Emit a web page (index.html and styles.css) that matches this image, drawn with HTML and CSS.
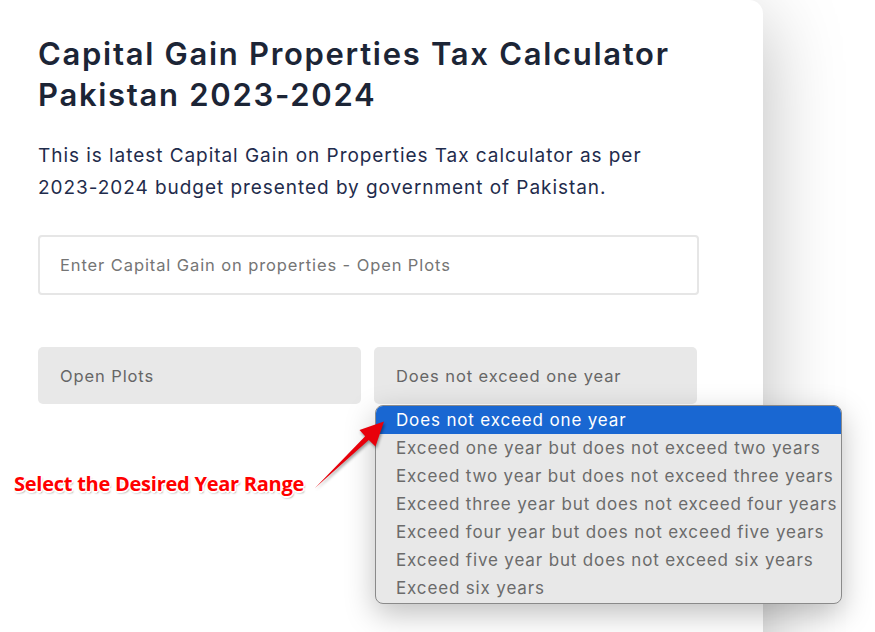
FILE: index.html
```html
<!DOCTYPE html>
<html lang="en">
<head>
<meta charset="utf-8">
<title>Capital Gain Properties Tax Calculator Pakistan 2023-2024</title>
<link rel="stylesheet" href="styles.css">
</head>
<body>
<div class="page">
  <main class="card">
    <h1 class="title">Capital Gain Properties Tax Calculator Pakistan 2023-2024</h1>
    <p class="intro">This is latest Capital Gain on Properties Tax calculator as per 2023-2024 budget presented by government of Pakistan.</p>
    <div class="field">Enter Capital Gain on properties - Open Plots</div>
    <div class="selects">
      <div class="select">Open Plots</div>
      <div class="select select-open">Does not exceed one year
        <ul class="dropdown">
          <li class="opt active">Does not exceed one year</li>
          <li class="opt">Exceed one year but does not exceed two years</li>
          <li class="opt">Exceed two year but does not exceed three years</li>
          <li class="opt">Exceed three year but does not exceed four years</li>
          <li class="opt">Exceed four year but does not exceed five years</li>
          <li class="opt">Exceed five year but does not exceed six years</li>
          <li class="opt">Exceed six years</li>
        </ul>
      </div>
    </div>
  </main>
  <div class="note">Select the Desired Year Range</div>
  <svg class="arrow" width="875" height="632" viewBox="0 0 875 632">
    <polygon points="315,488 365.2,436.2 359.5,430 384,421.5 375.5,446.5 368.8,440" fill="#e8000b"/>
  </svg>
</div>
</body>
</html>
```
FILE: styles.css
```css
html, body {
  margin: 0;
  padding: 0;
  background: #ffffff;
}
.page {
  position: relative;
  width: 875px;
  height: 632px;
  overflow: hidden;
  display: flex;
}
.card {
  width: 725px;
  min-height: 700px;
  background: #ffffff;
  border-top-right-radius: 14px;
  box-shadow: 0 20px 80px rgba(0, 0, 0, 0.27);
  padding: 33px 0 0 38px;
  box-sizing: content-box;
  font-family: "Inter", "Open Sans", sans-serif;
}
.title {
  margin: 0;
  width: 661px;
  font-size: 31px;
  line-height: 41px;
  font-weight: 600;
  color: #1c2536;
  letter-spacing: 1.7px;
}
.intro {
  margin: 25px 0 0 0;
  width: 661px;
  font-size: 19px;
  line-height: 32px;
  letter-spacing: 0.95px;
  color: #1f2c4c;
}
.field {
  margin-top: 31px;
  width: 661px;
  height: 60px;
  box-sizing: border-box;
  border: 2px solid #e6e6e6;
  border-radius: 4px;
  padding: 0 20px;
  display: flex;
  align-items: center;
  font-size: 16.5px;
  letter-spacing: 0.9px;
  color: #757575;
}
.selects {
  margin-top: 52px;
  display: grid;
  grid-template-columns: 323px 323px;
  gap: 13px;
}
.select {
  position: relative;
  height: 57px;
  background: #e8e8e8;
  border-radius: 5px;
  padding: 0 22px;
  display: flex;
  align-items: center;
  font-size: 16.5px;
  letter-spacing: 0.9px;
  color: #666666;
}
.dropdown {
  position: absolute;
  left: 1px;
  top: 58px;
  width: 467px;
  height: 199px;
  box-sizing: border-box;
  margin: 0;
  padding: 0;
  list-style: none;
  background: #e8e8e8;
  border: 1px solid #8a8a8a;
  border-radius: 8px;
  overflow: hidden;
  box-shadow: 0 10px 30px rgba(0, 0, 0, 0.25);
  letter-spacing: 0;
}
.opt {
  height: 28px;
  line-height: 28px;
  padding: 0 0 0 20px;
  font-size: 17px;
  letter-spacing: 0.85px;
  color: #6b6b6b;
  white-space: nowrap;
}
.opt.active {
  background: #1967d2;
  color: #ffffff;
}
.note {
  position: absolute;
  left: 14px;
  top: 471px;
  font-family: "Open Sans", sans-serif;
  font-weight: 700;
  font-size: 20px;
  line-height: 26px;
  letter-spacing: -0.25px;
  color: #ff0000;
  text-shadow: -1px -1px 0 #fff, 1px -1px 0 #fff, -1px 1px 0 #fff, 1px 1px 0 #fff, 0 -1.5px 0 #fff, 0 1.5px 0 #fff, -1.5px 0 0 #fff, 1.5px 0 0 #fff, 1px 2px 2px rgba(0, 0, 0, 0.45);
}
.arrow {
  position: absolute;
  left: 0;
  top: 0;
  pointer-events: none;
  filter: drop-shadow(1px 2px 1.5px rgba(0, 0, 0, 0.4));
}
```
